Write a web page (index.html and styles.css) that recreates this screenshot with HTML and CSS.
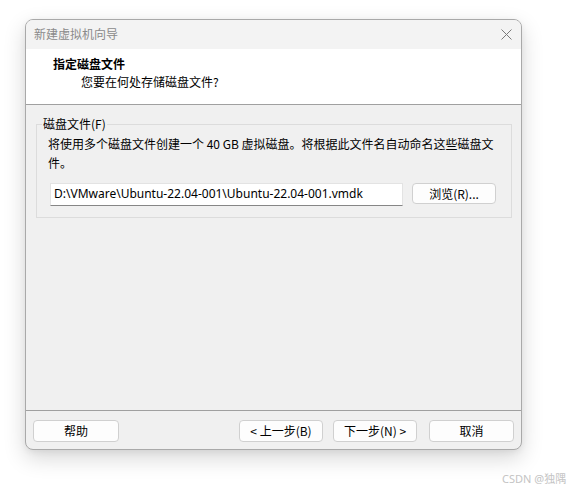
FILE: index.html
```html
<!DOCTYPE html>
<html lang="zh-CN">
<head>
<meta charset="utf-8">
<title>新建虚拟机向导</title>
<link rel="stylesheet" href="styles.css">
</head>
<body>
<div class="window">
  <div class="titlebar">
    <span class="title">新建虚拟机向导</span>
    <span class="close" aria-label="关闭">
      <svg width="11" height="11" viewBox="0 0 11 11"><path d="M0.5 0.5 L10.5 10.5 M10.5 0.5 L0.5 10.5" stroke="#7a7a7a" stroke-width="1" fill="none"/></svg>
    </span>
  </div>
  <div class="header">
    <div class="h-title">指定磁盘文件</div>
    <div class="h-sub">您要在何处存储磁盘文件?</div>
  </div>
  <div class="content">
    <fieldset class="group">
      <legend>磁盘文件(F)</legend>
      <p class="desc">将使用多个磁盘文件创建一个 40 GB 虚拟磁盘。将根据此文件名自动命名这些磁盘文<br>件。</p>
      <div class="row">
        <div class="input">D:\VMware\Ubuntu-22.04-001\Ubuntu-22.04-001.vmdk</div>
        <button class="btn browse">浏览(R)...</button>
      </div>
    </fieldset>
  </div>
  <div class="footer">
    <button class="btn help">帮助</button>
    <div class="nav">
      <button class="btn">&lt; 上一步(B)</button>
      <button class="btn">下一步(N) &gt;</button>
      <button class="btn cancel">取消</button>
    </div>
  </div>
</div>
<div class="watermark">CSDN @独隅</div>
</body>
</html>
```
FILE: styles.css
```css
html, body {
  margin: 0;
  padding: 0;
  background: #ffffff;
}
body {
  width: 567px;
  height: 492px;
  position: relative;
  overflow: hidden;
  padding: 19px 0 0 25px;
  box-sizing: border-box;
  font-family: "Noto Sans CJK SC", "Noto Sans", sans-serif;
  font-size: 12px;
  color: #000;
}
.window {
  width: 497px;
  height: 431px;
  box-sizing: border-box;
  border: 1px solid #a9a9a9;
  border-radius: 8px;
  background: #f0f0f0;
  box-shadow: 0 8px 22px rgba(0, 0, 0, 0.16), 0 2px 6px rgba(0,0,0,0.06);
  display: flex;
  flex-direction: column;
  overflow: hidden;
}
.titlebar {
  height: 29px;
  background: #f3f3f3;
  display: flex;
  align-items: center;
  justify-content: space-between;
  padding: 0 9px 0 8px;
  flex-shrink: 0;
}
.title {
  color: #8a8a8a;
  font-size: 12px;
  line-height: 16px;
  margin-top: -1px;
}
.close {
  display: flex;
  width: 11px;
  height: 11px;
  margin-top: -1px;
}
.header {
  height: 56px;
  background: #ffffff;
  border-bottom: 1px solid #a0a0a0;
  padding: 7px 0 0 27px;
  box-sizing: border-box;
  flex-shrink: 0;
}
.h-title {
  font-weight: 700;
  line-height: 16px;
}
.h-sub {
  line-height: 16px;
  margin-top: 2px;
  padding-left: 28px;
}
.content {
  flex: 1;
  padding: 11px 9px 0 10px;
}
.group {
  margin: 0;
  border: 1px solid #dcdcdc;
  padding: 2px 11px 11px 11px;
  min-width: 0;
}
.group legend {
  padding: 0 1px;
  margin-left: -6px;
  line-height: 16px;
}
.desc {
  margin: 0;
  line-height: 19px;
}
.row {
  display: flex;
  align-items: flex-start;
  gap: 9px;
  margin-top: 11px;
  padding-left: 2px;
}
.input {
  width: 353px;
  height: 23px;
  box-sizing: border-box;
  background: #ffffff;
  border: 1px solid #e3e3e3;
  border-bottom: 1px solid #868686;
  padding: 0 0 0 3px;
  line-height: 20px;
  font-family: "Noto Sans", "Noto Sans CJK SC", sans-serif;
  font-size: 12px;
  white-space: nowrap;
  overflow: hidden;
}
.btn {
  font-family: "Noto Sans CJK SC", "Noto Sans", sans-serif;
  font-size: 12px;
  color: #000;
  background: #fdfdfd;
  border: 1px solid #d0d0d0;
  border-radius: 4px;
  width: 84px;
  height: 22px;
  padding: 0;
  line-height: 18px;
  box-sizing: border-box;
}
.browse {
  height: 21px;
  width: 84px;
}
.footer {
  height: 39px;
  border-top: 1px solid #a0a0a0;
  box-sizing: border-box;
  display: flex;
  justify-content: space-between;
  align-items: flex-start;
  padding: 9px 7px 0 7px;
  flex-shrink: 0;
}
.help {
  width: 86px;
}
.nav {
  display: flex;
  gap: 10px;
}
.cancel {
  width: 85px;
  margin-left: 2px;
}
.watermark {
  position: absolute;
  left: 502px;
  top: 472px;
  white-space: nowrap;
  color: #c4c4c4;
  font-size: 11px;
  line-height: 14px;
  font-family: "Noto Sans", "Noto Sans CJK SC", sans-serif;
}
```
